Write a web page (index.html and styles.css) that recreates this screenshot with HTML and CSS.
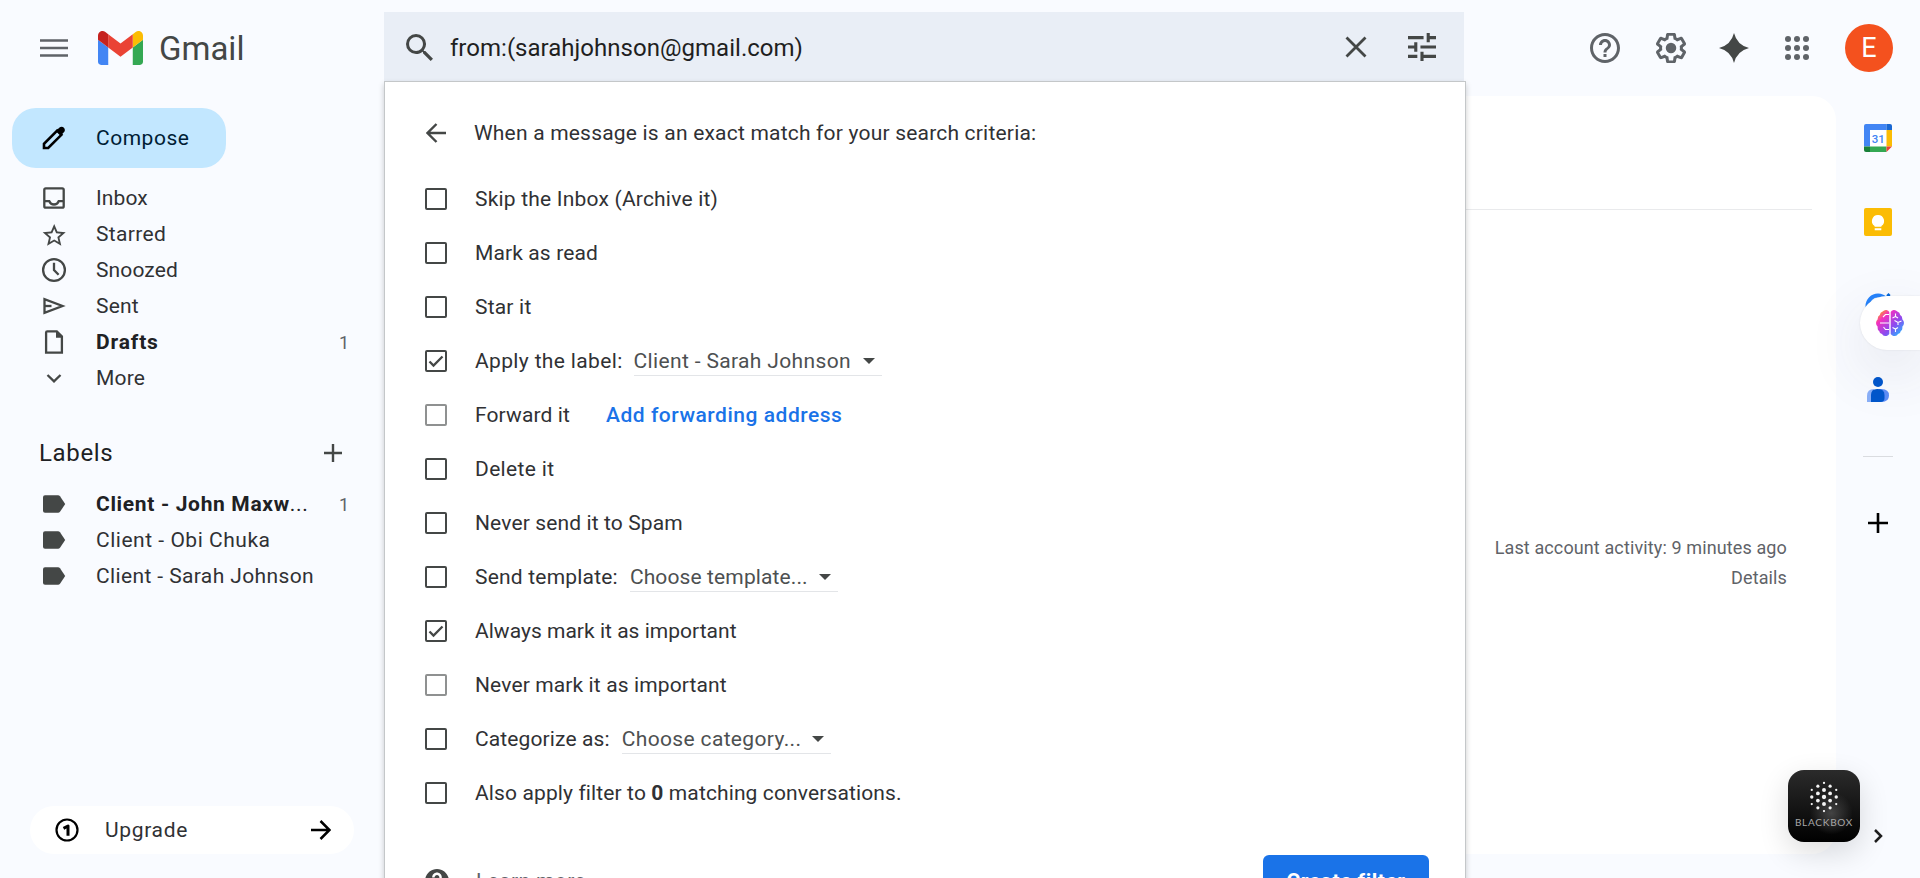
FILE: index.html
```html
<!DOCTYPE html>
<html lang="en">
<head>
<meta charset="utf-8">
<title>Gmail</title>
<link rel="stylesheet" href="styles.css">
</head>
<body>
<div class="app">
  <header class="topbar">
    <div class="brand">
      <svg class="menu-icon" viewBox="0 0 28 18"><path d="M0 1.5h28M0 9h28M0 16.5h28"/></svg>
      <svg class="gmail-logo" viewBox="52 42 88 66"><path fill="#4285f4" d="M58 108h14V74L52 59v43c0 3.32 2.69 6 6 6"/><path fill="#34a853" d="M120 108h14c3.32 0 6-2.69 6-6V59l-20 15"/><path fill="#fbbc04" d="M120 48v26l20-15v-8c0-7.42-8.47-11.65-14.4-7.2"/><path fill="#ea4335" d="M72 74V48l24 18 24-18v26L96 92"/><path fill="#c5221f" d="M52 51v8l20 15V48l-5.6-4.2c-5.94-4.45-14.4-.22-14.4 7.2"/></svg>
      <span class="brand-name">Gmail</span>
    </div>
    <div class="search">
      <svg class="i-search" viewBox="3 3 17.5 17.5"><path d="M15.5 14h-.79l-.28-.27A6.471 6.471 0 0 0 16 9.5 6.5 6.5 0 1 0 9.5 16c1.61 0 3.09-.59 4.23-1.57l.27.28v.79l5 4.99L20.49 19l-4.99-5zm-6 0C7.01 14 5 11.99 5 9.5S7.01 5 9.5 5 14 7.01 14 9.5 11.99 14 9.5 14z"/></svg>
      <span class="query t0">from:(sarahjohnson@gmail.com)</span>
      <svg class="i-close" viewBox="0 0 22 22"><path d="M1.500 1.500l19 19M20.500 1.500l-19 19"/></svg>
      <svg class="i-tune" viewBox="3 3 18 18"><path d="M3 17v2h6v-2H3zM3 5v2h10V5H3zm10 16v-2h8v-2h-8v-2h-2v6h2zM7 9v2H3v2h4v2h2V9H7zm14 4v-2H11v2h10zm-6-4h2V7h4V5h-4V3h-2v6z"/></svg>
    </div>
    <div class="tools">
      <svg viewBox="2 2 20 20"><path d="M11 18h2v-2h-2v2zm1-16C6.48 2 2 6.48 2 12s4.48 10 10 10 10-4.480 10-10S17.520 2 12 2zm0 18c-4.410 0-8-3.590-8-8s3.590-8 8-8 8 3.590 8 8-3.590 8-8 8zm0-14c-2.210 0-4 1.790-4 4h2c0-1.100.9-2 2-2s2 .9 2 2c0 2-3 1.750-3 5h2c0-2.250 3-2.500 3-5 0-2.210-1.790-4-4-4z"/></svg>
      <svg viewBox="2 2 20 20"><path d="M13.85 22.25h-3.7c-.74 0-1.36-.54-1.45-1.27l-.27-1.89c-.27-.14-.53-.29-.79-.46l-1.8.72c-.7.26-1.47-.03-1.81-.65L2.2 15.53c-.35-.66-.2-1.44.36-1.88l1.53-1.19c-.01-.15-.02-.3-.02-.46 0-.15.01-.31.02-.46l-1.52-1.19c-.59-.45-.74-1.26-.37-1.88l1.85-3.19c.34-.62 1.11-.9 1.79-.63l1.81.73c.26-.17.52-.32.78-.46l.27-1.91c.09-.7.71-1.25 1.44-1.25h3.7c.74 0 1.36.54 1.45 1.27l.27 1.89c.27.14.53.29.79.46l1.8-.72c.71-.26 1.48.03 1.82.65l1.84 3.18c.36.66.2 1.44-.36 1.88l-1.52 1.19c.01.15.02.3.02.46s-.01.31-.02.46l1.52 1.19c.56.45.72 1.23.37 1.86l-1.86 3.22c-.34.62-1.11.9-1.8.63l-1.8-.72c-.26.17-.52.32-.78.46l-.27 1.91c-.1.68-.72 1.22-1.46 1.22zm-3.23-2h2.76l.37-2.55.53-.22c.44-.18.88-.44 1.34-.78l.45-.34 2.38.96 1.38-2.4-2.03-1.58.07-.56c.03-.26.06-.51.06-.78s-.03-.53-.06-.78l-.07-.56 2.03-1.58-1.39-2.4-2.39.96-.45-.35c-.42-.32-.87-.58-1.33-.77l-.52-.22-.37-2.55h-2.76l-.37 2.55-.53.21c-.44.19-.88.44-1.34.79l-.45.33-2.38-.95-1.39 2.39 2.03 1.58-.07.56a7 7 0 0 0-.06.79c0 .26.02.53.06.78l.07.56-2.03 1.58 1.38 2.4 2.39-.96.45.35c.43.33.86.58 1.33.77l.53.22.38 2.55z"/><circle cx="12" cy="12" r="3.5"/></svg>
      <svg class="spark" viewBox="0 0 30 30"><path d="M15 0Q18 12 30 15 18 18 15 30 12 18 0 15 12 12 15 0z"/></svg>
      <svg class="grid" viewBox="0 0 24 24"><circle cx="3" cy="3" r="3"/><circle cx="12" cy="3" r="3"/><circle cx="21" cy="3" r="3"/><circle cx="3" cy="12" r="3"/><circle cx="12" cy="12" r="3"/><circle cx="21" cy="12" r="3"/><circle cx="3" cy="21" r="3"/><circle cx="12" cy="21" r="3"/><circle cx="21" cy="21" r="3"/></svg>
      <span class="avatar">E</span>
    </div>
  </header>

  <div class="body">
    <aside class="sidebar">
      <button class="compose">
        <svg viewBox="0 0 30 30"><path fill="none" stroke="#000" stroke-width="2.600" d="M5 25v-4.200L18.200 7.600l4.200 4.200L9.200 25z"/><path d="M17 8l3.200-3.200c1.600-1.600 3.600-1.200 4.700-.1s1.500 3.100 0 4.600L21.700 12.500z"/></svg>
        <span class="t5">Compose</span>
      </button>
      <nav class="nav">
        <a class="row"><svg viewBox="0 0 30 30"><rect class="ln" x="5.300" y="5.300" width="19.400" height="19.400" rx="1.500"/><path class="ln" d="M5 18.200h5.300c.9 2.200 2.600 3.300 4.700 3.300s3.800-1.100 4.700-3.300H25"/></svg><span class="t1">Inbox</span></a>
        <a class="row"><svg viewBox="0 0 30 30"><path transform="translate(1.400 2.700) scale(1.150)" d="M22 9.240l-7.190-.62L12 2 9.190 8.630 2 9.240l5.460 4.730L5.820 21 12 17.270 18.180 21l-1.630-7.030L22 9.240zM12 15.400l-3.760 2.270 1-4.280-3.320-2.880 4.380-.38L12 6.100l1.710 4.040 4.380.38-3.320 2.880 1 4.280L12 15.400z"/></svg><span class="t3">Starred</span></a>
        <a class="row"><svg viewBox="0 0 30 30"><circle class="ln" cx="15" cy="15" r="10.900"/><path class="ln" d="M15 7.700v7.300l4.600 4.700"/></svg><span class="t1">Snoozed</span></a>
        <a class="row"><svg viewBox="0 0 30 30"><path class="ln" d="M5.500 8.100v13.800L23.500 15z"/><path class="ln" d="M5.500 15h7"/></svg><span class="t2">Sent</span></a>
        <a class="row bold"><svg viewBox="0 0 30 30"><path class="ln" d="M8.300 4.300h9.500l5.100 5.100v16.300H7.100V5.500q0-1.200 1.200-1.200z"/><path d="M17 4v6.700h6.700V9.500L18.300 4z"/></svg><span class="t7">Drafts</span><i>1</i></a>
        <a class="row"><svg viewBox="0 0 30 30"><path class="ln" d="M8.500 12l6.500 6.300 6.500-6.300"/></svg><span class="t2">More</span></a>
      </nav>
      <div class="labels-head"><span class="t6">Labels</span><svg viewBox="0 0 18 18"><path d="M9 0v18M0 9h18"/></svg></div>
      <nav class="nav">
        <a class="row bold"><svg viewBox="0 0 30 30"><path d="M6 6.200h13q1.300 0 2 1L26.200 15l-5.200 7.800q-.7 1-2 1H6q-2 0-2-2V8.200q0-2 2-2z"/></svg><span class="t6">Client - John Maxw<small>...</small></span><i>1</i></a>
        <a class="row"><svg viewBox="0 0 30 30"><path d="M6 6.200h13q1.300 0 2 1L26.200 15l-5.200 7.800q-.7 1-2 1H6q-2 0-2-2V8.200q0-2 2-2z"/></svg><span class="t5">Client - Obi Chuka</span></a>
        <a class="row"><svg viewBox="0 0 30 30"><path d="M6 6.200h13q1.300 0 2 1L26.200 15l-5.200 7.800q-.7 1-2 1H6q-2 0-2-2V8.200q0-2 2-2z"/></svg><span class="t4">Client - Sarah Johnson</span></a>
      </nav>
      <button class="upgrade">
        <svg class="one" viewBox="0 0 24 24"><circle cx="12" cy="12" r="10.500"/><path d="M8.500 10.300L13 8v9.800"/></svg>
        <span class="t6">Upgrade</span>
        <svg class="go" viewBox="0 0 20 20"><path d="M0 10h18M9.500 1l9 9-9 9"/></svg>
      </button>
    </aside>

    <main class="content">
      <div class="rule"></div>
      <div class="activity"><span class="t1">Last account activity: 9 minutes ago</span><span class="t1">Details</span></div>
    </main>

    <aside class="rail">
      <svg class="cal" viewBox="0 0 28 28"><path fill="#fff" d="M5 5h18v18H5z"/><path fill="#4285f4" d="M2 0h20.500v6H6v16.500H0V2q0-2 2-2z"/><path fill="#1967d2" d="M22.500 0H26q2 0 2 2v4h-5.500z"/><path fill="#fbbc04" d="M22.500 6H28v16.500h-5.500z"/><path fill="#34a853" d="M6 22.500h16.500V28H6z"/><path fill="#188038" d="M0 22.500h6V28H2q-2 0-2-2z"/><path fill="#ea4335" d="M22.500 22.500H28L22.500 28z"/><text x="14.300" y="18.600">31</text></svg>
      <svg class="keep" viewBox="0 0 28 28"><rect width="28" height="28" rx="2" fill="#fbbc04"/><path fill="#fff" d="M14 7a6 6 0 0 0-3.400 11v.8h6.800V18A6 6 0 0 0 14 7zM10.700 20.300h6.600v2h-6.600z"/></svg>
      <svg class="tasks" viewBox="0 0 28 28"><circle cx="14" cy="14" r="10.500" fill="none" stroke="#2684fc" stroke-width="4"/><path d="M22.500 3l2-2 2 2L23 9z" fill="#0066da"/></svg>
      <svg class="contact" viewBox="0 0 22 25"><circle cx="11" cy="5" r="5" fill="#0057cc"/><path fill="#8ab0f8" d="M0 25v-6q0-7 7-7v13z"/><path fill="#5e8ef7" d="M12 12h2.500q7.500 0 7.500 6.500T14.500 25H12z"/><path fill="#0057cc" d="M4 25v-7q0-6 6-6h1q6.500 0 6.500 6v3q0 4-4 4z"/></svg>
      <div class="rail-rule"></div>
      <svg class="plus" viewBox="0 0 20 20"><path d="M10 0v20M0 10h20"/></svg>
      <svg class="chev" viewBox="0 0 9 14"><path d="M1 1l6 6-6 6"/></svg>
    </aside>
  </div>

  <section class="filter-menu">
    <div class="opt head"><svg class="back" viewBox="0 0 20 20"><path d="M20 10H2M10.500 1l-9 9 9 9"/></svg><span class="t2">When a message is an exact match for your search criteria:</span></div>
    <div class="opt"><b class="box"></b><span class="t2">Skip the Inbox (Archive it)</span></div>
    <div class="opt"><b class="box"></b><span class="t1">Mark as read</span></div>
    <div class="opt"><b class="box"></b><span class="t2">Star it</span></div>
    <div class="opt"><b class="box"><svg viewBox="0 0 18 18"><path d="M2.500 9.500l4 4L15.500 4.500"/></svg></b><span class="t3">Apply the label:</span><div class="select sel-label"><span class="t3">Client - Sarah Johnson</span><em></em></div></div>
    <div class="opt"><b class="box off"></b><span class="t1">Forward it</span><a class="link t5">Add forwarding address</a></div>
    <div class="opt"><b class="box"></b><span class="t3">Delete it</span></div>
    <div class="opt"><b class="box"></b><span class="t1">Never send it to Spam</span></div>
    <div class="opt"><b class="box"></b><span class="t2">Send template:</span><div class="select sel-template"><span class="t1">Choose template...</span><em></em></div></div>
    <div class="opt"><b class="box"><svg viewBox="0 0 18 18"><path d="M2.500 9.500l4 4L15.500 4.500"/></svg></b><span class="t0">Always mark it as important</span></div>
    <div class="opt"><b class="box off"></b><span class="t1">Never mark it as important</span></div>
    <div class="opt"><b class="box"></b><span class="t1">Categorize as:</span><div class="select sel-category"><span class="t3">Choose category...</span><em></em></div></div>
    <div class="opt"><b class="box"></b><span class="t1">Also apply filter to <strong>0</strong> matching conversations.</span></div>
    <div class="menu-foot">
      <svg class="help" viewBox="2 2 20 20"><path d="M12 2C6.480 2 2 6.480 2 12s4.480 10 10 10 10-4.480 10-10S17.520 2 12 2zm1 17h-2v-2h2v2zm2.070-7.750l-.9.920C13.450 12.900 13 13.500 13 15h-2v-.5c0-1.100.45-2.100 1.170-2.830l1.240-1.260c.37-.36.59-.86.59-1.410 0-1.100-.9-2-2-2s-2 .9-2 2H8c0-2.210 1.790-4 4-4s4 1.790 4 4c0 .88-.36 1.680-.93 2.250z"/></svg>
      <span class="learn t4">Learn more</span>
      <button class="create"><span class="t5">Create filter</span></button>
    </div>
  </section>

  <div class="brain-tab">
    <svg viewBox="0 0 28 26"><defs><linearGradient id="bg" x1="0" y1="0" x2="1" y2="1"><stop offset=".08" stop-color="#ff9f1c"/><stop offset=".28" stop-color="#f32fc0"/><stop offset=".62" stop-color="#8a4bf0"/><stop offset=".9" stop-color="#2fb0ff"/></linearGradient></defs><path fill="url(#bg)" d="M13.300 2v22q-1.800 2.500-4.300 2-2 0-3-2-2.500-.3-2.800-3-2-1-1.500-4.300Q0 15 0 13t1.700-3.700Q1.500 6 3.800 5 4.300 2.200 6.300 1.700 8.500-.3 10.500.1q2 .4 2.800 1.900zM14.700 2v22q1.800 2.500 4.300 2 2 0 3-2 2.500-.3 2.800-3 2-1 1.500-4.300Q28 15 28 13t-1.700-3.700Q26.500 6 24.200 5q-.5-2.800-2.500-3.300-2.200-2-4.200-1.600-2 .4-2.800 1.900z"/><path fill="none" stroke="#fff" stroke-width="1.100" d="M13 4.500H9.500L7 7M13 13H4M13 19.500H9.500L7.500 17M16.500 8l3-1.500V3.500M19.500 6.500L22 8M18.500 10.500l3.500 2 3.500-1.500M22 12.500V15M16.500 17.500l3 1.500 2.500-1.500M19.500 19v3"/></svg>
  </div>
  <div class="blackbox">
    <svg viewBox="0 0 30 34"><g fill="#f4f4f4"><circle cx="15" cy="2" r="1.200"/><circle cx="8.500" cy="5.500" r="1.700"/><circle cx="21.500" cy="5.500" r="1.700"/><circle cx="2" cy="9.500" r="1.200"/><circle cx="15" cy="9.500" r="2.100"/><circle cx="28" cy="9.500" r="1.200"/><circle cx="8.500" cy="13.200" r="2"/><circle cx="21.500" cy="13.200" r="2"/><circle cx="2" cy="17" r="1.800"/><circle cx="15" cy="17" r="2.300"/><circle cx="28" cy="17" r="1.800"/><circle cx="8.500" cy="20.800" r="2"/><circle cx="21.500" cy="20.800" r="2"/><circle cx="2" cy="24.500" r="1.200"/><circle cx="15" cy="24.500" r="2.100"/><circle cx="28" cy="24.500" r="1.200"/><circle cx="8.500" cy="28.500" r="1.700"/><circle cx="21.500" cy="28.500" r="1.700"/><circle cx="15" cy="32" r="1.200"/></g></svg>
    <span>BLACKBOX</span>
  </div>
</div>
</body>
</html>
```
FILE: styles.css
```css
* { box-sizing: border-box; }
body { margin: 0; background: #f9fbff; font-family: Roboto, sans-serif; font-size: 21px; color: #303134; overflow: hidden; }
button { border: 0; font: inherit; margin: 0; padding: 0; }
svg { display: block; flex: none; }
span { white-space: nowrap; }
.app { position: relative; height: 878px; overflow: hidden; display: flex; flex-direction: column; background: #f9fbff; }

/* tracking steps */
.t0 { letter-spacing: .02px; }
.t1 { letter-spacing: .12px; }
.t2 { letter-spacing: .2px; }
.t3 { letter-spacing: .35px; }
.t4 { letter-spacing: .38px; }
.t5 { letter-spacing: .52px; }
.t6 { letter-spacing: .66px; }
.t7 { letter-spacing: .85px; }

.topbar { display: flex; height: 96px; flex: none; }
.brand { width: 384px; display: flex; align-items: center; padding-left: 40px; }
.menu-icon { width: 28px; height: 18px; stroke: #5f6368; stroke-width: 2.7; }
.gmail-logo { width: 45px; height: 34px; margin-left: 30px; }
.brand-name { font-size: 33px; color: #444746; margin-left: 16px; }
.search { width: 1080px; height: 70px; margin-top: 12px; background: #e9eef6; display: flex; align-items: center; padding: 0 28px 0 22px; }
.search svg { fill: #444746; }
.i-search { width: 27px; height: 27px; }
.query { font-size: 24px; margin-left: 17px; flex: 1; padding-top: 2px; color: #1f1f1f; }
.search .i-close { width: 22px; height: 22px; fill: none; stroke: #444746; stroke-width: 2.8; }
.i-tune { width: 28px; height: 28px; margin-left: 41px; }
.tools { flex: 1; display: flex; align-items: center; padding-left: 126px; }
.tools svg { width: 30px; height: 30px; fill: #5f6368; margin-right: 36px; }
.tools .spark { fill: #444746; margin-left: -3px; }
.tools .grid { width: 24px; height: 24px; }
.avatar { width: 48px; height: 48px; border-radius: 50%; background: #f4511e; color: #fff; font-size: 27px; display: flex; align-items: center; justify-content: center; }

.body { flex: 1; display: flex; min-height: 0; }
.sidebar { width: 384px; display: flex; flex-direction: column; padding: 12px 30px 24px 0; }
.compose { width: 214px; height: 60px; margin: 0 0 12px 12px; border-radius: 24px; background: #c2e7ff; color: #001d35; display: flex; align-items: center; padding-left: 27px; flex: none; }
.compose svg, .row svg { width: 30px; height: 30px; margin-right: 27px; }
.nav { display: flex; flex-direction: column; }
.row { height: 36px; display: flex; align-items: center; padding: 0 5px 0 39px; }
.row svg { fill: #444746; }
.row .ln { fill: none; stroke: #444746; stroke-width: 2.3; }
.row i { margin-left: auto; font-style: normal; font-weight: 400; font-size: 18px; color: #5f6368; }
.bold { font-weight: 700; color: #202124; }
.bold small { font-size: 21px; font-weight: 400; }
.labels-head { height: 48px; margin: 33px 12px 9px 0; padding-left: 39px; display: flex; align-items: center; justify-content: space-between; font-size: 24px; color: #202124; }
.labels-head svg { width: 18px; height: 18px; stroke: #444746; stroke-width: 2.4; }
.upgrade { margin: auto 0 0 30px; width: 324px; height: 48px; border-radius: 24px; background: #fff; display: flex; align-items: center; padding: 0 23px 0 25px; color: #303134; flex: none; }
.one { width: 24px; height: 24px; fill: none; stroke: #000; stroke-width: 2.2; }
.one path { stroke-width: 3; stroke-linejoin: round; }
.upgrade span { margin-left: 26px; }
.go { width: 20px; height: 20px; margin-left: auto; fill: none; stroke: #000; stroke-width: 2.5; }

.content { flex: 1; margin-bottom: 24px; background: #fff; border-radius: 24px; padding: 113px 24px 0 0; }
.rule { height: 1px; background: #e9eaec; }
.activity { margin-top: 323px; padding-right: 25px; text-align: right; font-size: 18px; line-height: 30px; color: #5f6368; display: flex; flex-direction: column; align-items: flex-end; }
.rail { width: 84px; display: flex; flex-direction: column; align-items: center; padding: 28px 0 35px; }
.cal, .keep, .tasks { width: 28px; height: 28px; margin-bottom: 56px; }
.cal text { font: 500 11.5px Roboto, sans-serif; fill: #4285f4; text-anchor: middle; }
.contact { width: 22px; height: 25px; margin-top: 1px; }
.rail-rule { width: 30px; height: 1px; background: #dadce0; margin: 54px 0 56px; }
.plus { width: 20px; height: 20px; stroke: #000; stroke-width: 2.6; }
.chev { width: 9px; height: 14px; margin-top: auto; fill: none; stroke: #1f1f1f; stroke-width: 2.5; }

.filter-menu { position: absolute; left: 384px; top: 81px; width: 1082px; height: 820px; background: #fff; border: 1px solid #c4c7c9; box-shadow: 0 3px 6px rgba(0,0,0,.2); padding: 18px 36px 0 40px; }
.opt { height: 54px; display: flex; align-items: center; }
.head { height: 66px; margin-bottom: 6px; }
.back { width: 20px; height: 20px; margin: 0 28px 0 1px; fill: none; stroke: #444746; stroke-width: 2.4; }
.box { width: 22px; height: 22px; border: 2.5px solid #444746; border-radius: 2px; margin-right: 28px; flex: none; }
.box svg { width: 18px; height: 18px; fill: none; stroke: #444746; stroke-width: 2.3; }
.off { border-color: #8f9191; }
.select { height: 30px; border-bottom: 1px solid #e3e5e8; color: #4d5051; display: flex; align-items: center; }
.select em { margin-left: auto; margin-right: 7px; border: 6.5px solid transparent; border-top: 6px solid #444746; border-bottom: 0; }
.sel-label { width: 248px; margin-left: 11px; }
.sel-template { width: 208px; margin-left: 12px; }
.sel-category { width: 209px; margin-left: 12px; }
.link { color: #1a73e8; font-weight: 500; margin-left: 36px; }
.menu-foot { display: flex; align-items: center; height: 54px; margin-top: 35px; }
.help { width: 24px; height: 24px; fill: #444746; margin: 0 27px 2px 0; }
.learn { color: #5f6368; padding-bottom: 2px; }
.create { margin-left: auto; width: 166px; height: 54px; border-radius: 6px; background: #1a73e8; color: #fff; font-weight: 700; }
.create span { position: relative; top: -1px; }

.brain-tab { position: absolute; left: 1860px; top: 296px; width: 60px; height: 54px; border-radius: 27px 0 0 27px; background: #fff; box-shadow: 0 20px 60px rgba(60,60,90,.12), 0 0 2px rgba(0,0,0,.1); display: flex; align-items: center; padding-left: 16px; }
.brain-tab svg { width: 28px; height: 26px; }
.blackbox { position: absolute; left: 1788px; top: 770px; width: 72px; height: 72px; border-radius: 16px; background: radial-gradient(circle at 60% 60%, #444 0, transparent 35%), linear-gradient(#2b2b2b, #000); box-shadow: 0 10px 30px rgba(0,0,0,.14); display: flex; flex-direction: column; align-items: center; padding-top: 11px; }
.blackbox svg { width: 30px; height: 32px; }
.blackbox span { font: 10px/12px Lato, sans-serif; letter-spacing: .75px; color: #a8a8a8; margin-top: 3px; }
```
